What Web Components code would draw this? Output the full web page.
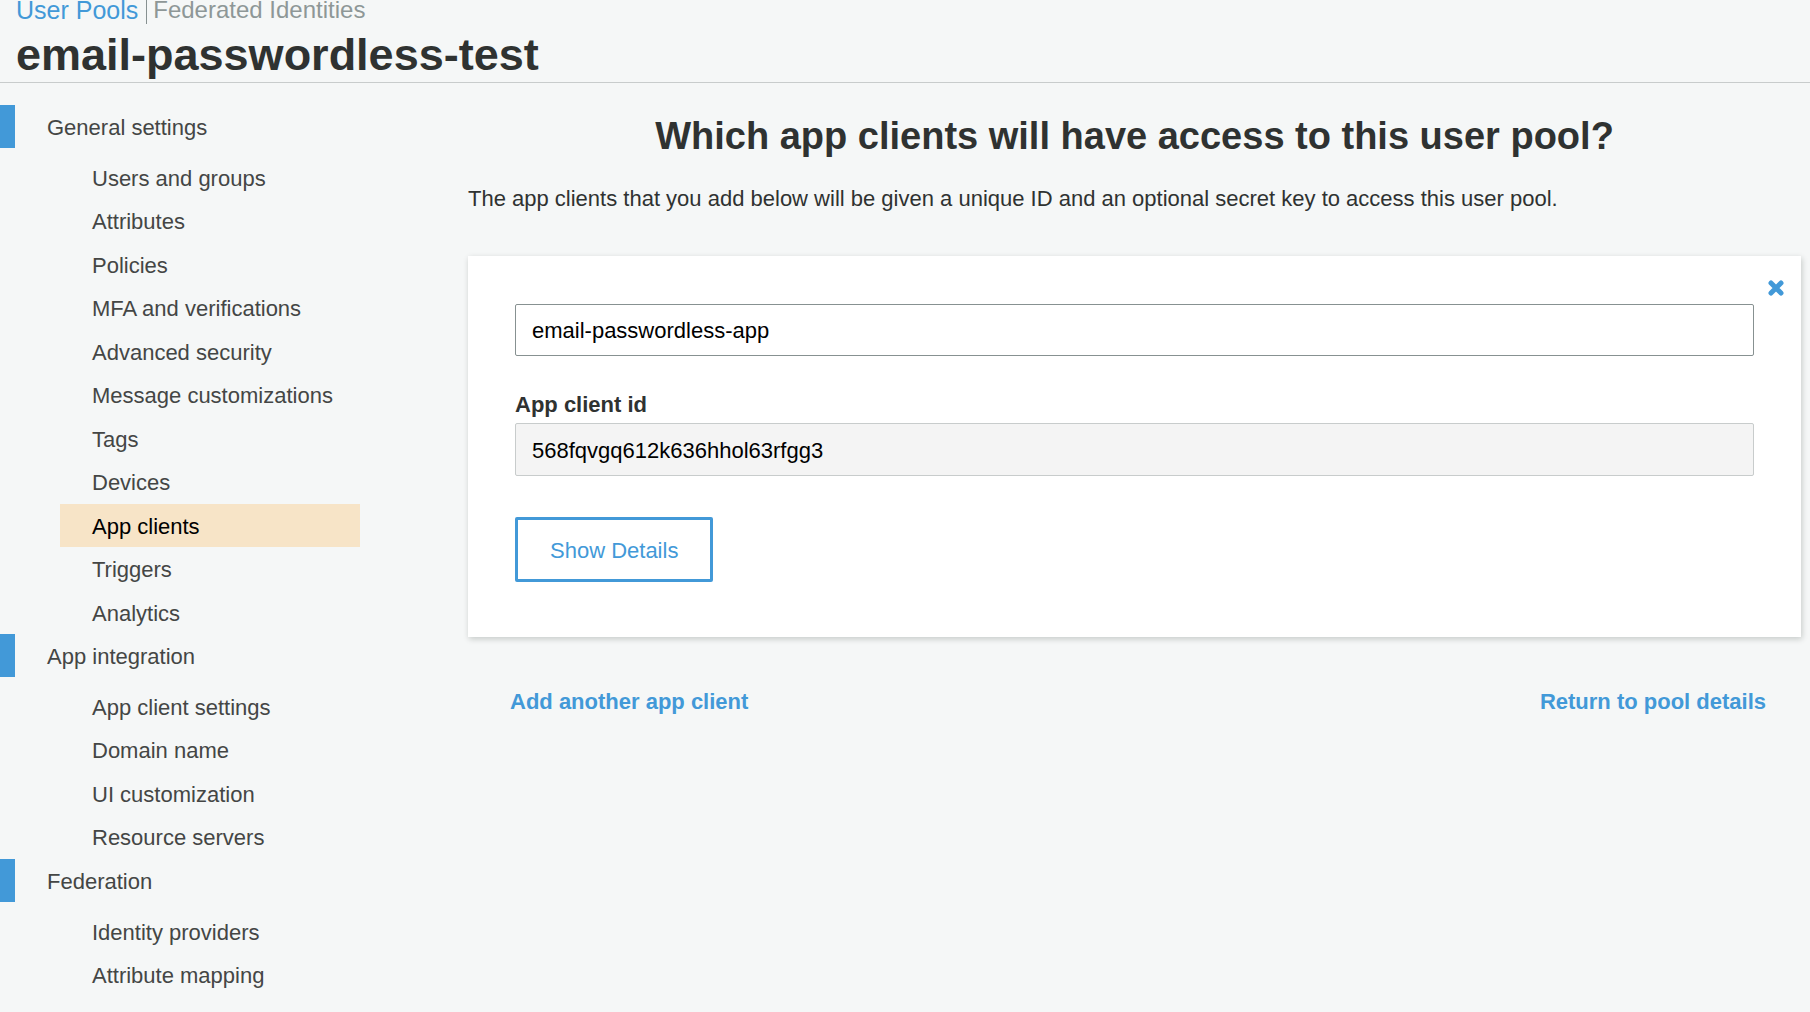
<!DOCTYPE html>
<html lang="en">
<head>
<meta charset="utf-8">
<meta name="viewport" content="width=device-width, initial-scale=1">
<title>User Pools</title>
<style>
  body {
    margin: 0;
    background: #f5f7f7;
    color: #2f3231;
    font: 22px/24px "Liberation Sans", Arial, sans-serif;
    --accent: #4299d8;
  }
</style>
</head>
<body>
<pool-console>
  <pool-header slot="header" name="email-passwordless-test"></pool-header>
  <nav-section slot="nav" heading="General settings">
    <nav-item>Users and groups</nav-item>
    <nav-item>Attributes</nav-item>
    <nav-item>Policies</nav-item>
    <nav-item>MFA and verifications</nav-item>
    <nav-item>Advanced security</nav-item>
    <nav-item>Message customizations</nav-item>
    <nav-item>Tags</nav-item>
    <nav-item>Devices</nav-item>
    <nav-item active>App clients</nav-item>
    <nav-item>Triggers</nav-item>
    <nav-item>Analytics</nav-item>
  </nav-section>
  <nav-section slot="nav" heading="App integration">
    <nav-item>App client settings</nav-item>
    <nav-item>Domain name</nav-item>
    <nav-item>UI customization</nav-item>
    <nav-item>Resource servers</nav-item>
  </nav-section>
  <nav-section slot="nav" heading="Federation">
    <nav-item>Identity providers</nav-item>
    <nav-item>Attribute mapping</nav-item>
  </nav-section>
  <app-clients>
    <client-card name="email-passwordless-app" client-id="568fqvgq612k636hhol63rfgg3"></client-card>
  </app-clients>
</pool-console>

<script>
  const define = (tag, markup, setup) => {
    const template = document.createElement('template');
    template.innerHTML = '<style>*{box-sizing:border-box}a{color:var(--accent);text-decoration:none}</style>' + markup;
    customElements.define(tag, class extends HTMLElement {
      constructor() {
        super();
        this.attachShadow({ mode: 'open' }).append(template.content.cloneNode(true));
      }
      connectedCallback() {
        if (setup) setup(this, this.shadowRoot);
      }
    });
  };

  define('pool-console', `
    <style>
      :host { display: block; }
      .body { display: grid; grid-template-columns: 468px minmax(0, 1fr); }
      nav { padding: 22px 0 15px; }
      main { padding: 30px 9px 30px 0; }
    </style>
    <slot name="header"></slot>
    <div class="body">
      <nav aria-label="User pool settings"><slot name="nav"></slot></nav>
      <main><slot></slot></main>
    </div>`);

  define('pool-header', `
    <style>
      :host { display: block; padding-left: 16px; border-bottom: 1px solid #c8cccc; }
      .tabs { display: flex; height: 24px; font-size: 24px; line-height: 20px; }
      .tabs a:first-child { padding-right: 8px; border-right: 1px solid #879191; font-size: 25px; }
      .tabs a:last-child { padding-left: 6px; color: #8e9797; }
      h1 { margin: 0; padding-top: 4px; font-size: 45px; line-height: 54px; }
    </style>
    <div class="tabs"><a href="#pools">User Pools</a><a href="#identities">Federated Identities</a></div>
    <h1></h1>`,
    (host, root) => { root.querySelector('h1').textContent = host.getAttribute('name'); });

  define('nav-section', `
    <style>
      :host { display: block; }
      a { display: flex; align-items: center; height: 43px; margin-bottom: 8px; padding: 2px 0 0 32px; border-left: 15px solid var(--accent); color: #444645; }
      ::slotted(nav-item) { height: 43px; }
      ::slotted(nav-item:nth-child(even)) { height: 44px; }
    </style>
    <a href="#section"></a>
    <slot></slot>`,
    (host, root) => { root.querySelector('a').textContent = host.getAttribute('heading'); });

  define('nav-item', `
    <style>
      :host { display: block; width: 300px; margin-left: 60px; color: #444645; }
      :host([active]) { background: #f7e4c7; color: #000; }
      a { display: flex; align-items: center; height: 100%; padding: 2px 0 0 32px; color: inherit; }
    </style>
    <a href="#item"><slot></slot></a>`);

  define('app-clients', `
    <style>
      :host { display: block; }
      h2 { margin: 0 0 25px; text-align: center; font-size: 38px; line-height: 46px; }
      p { margin: 0 0 42px; line-height: 30px; }
      .links { display: flex; justify-content: space-between; padding: 53px 35px 0 42px; font-weight: bold; }
    </style>
    <h2>Which app clients will have access to this user pool?</h2>
    <p>The app clients that you add below will be given a unique ID and an optional secret key to access this user pool.</p>
    <slot></slot>
    <div class="links"><a href="#add">Add another app client</a><a href="#details">Return to pool details</a></div>`);

  define('client-card', `
    <style>
      :host { display: grid; grid-template-columns: minmax(0, 1fr) 47px; padding-left: 47px; background: #fff; box-shadow: 1px 2px 6px rgba(0, 20, 10, .2); }
      form { padding: 48px 0 55px; }
      input { display: block; width: 100%; height: 52px; padding: 2px 16px 0; border: 1px solid #879191; border-radius: 2px; background: #fff; color: #000; font: inherit; }
      input[readonly] { height: 53px; border-color: #c8cccc; background: #f4f4f4; }
      label { display: block; margin: 37px 0 6px; font-weight: bold; }
      button { font: inherit; color: var(--accent); background: none; cursor: pointer; }
      .details { height: 65px; margin-top: 41px; padding: 2px 32px 0; border: 3px solid; border-radius: 2px; }
      .close { display: flex; justify-self: start; align-self: start; margin-top: 24px; padding: 0 0 0 14px; border: 0; }
    </style>
    <form>
      <input class="name" type="text" aria-label="App client name">
      <label for="client-id">App client id</label>
      <input id="client-id" type="text" readonly>
      <button class="details" type="button">Show Details</button>
    </form>
    <button class="close" type="button" aria-label="Remove app client">
      <svg width="16" height="16" viewBox="0 0 16 16"><path d="M3 3l10 10M13 3L3 13" stroke="currentColor" stroke-width="5" stroke-linecap="round"/></svg>
    </button>`,
    (host, root) => {
      root.querySelector('.name').value = host.getAttribute('name');
      root.querySelector('#client-id').value = host.getAttribute('client-id');
    });
</script>
</body>
</html>
